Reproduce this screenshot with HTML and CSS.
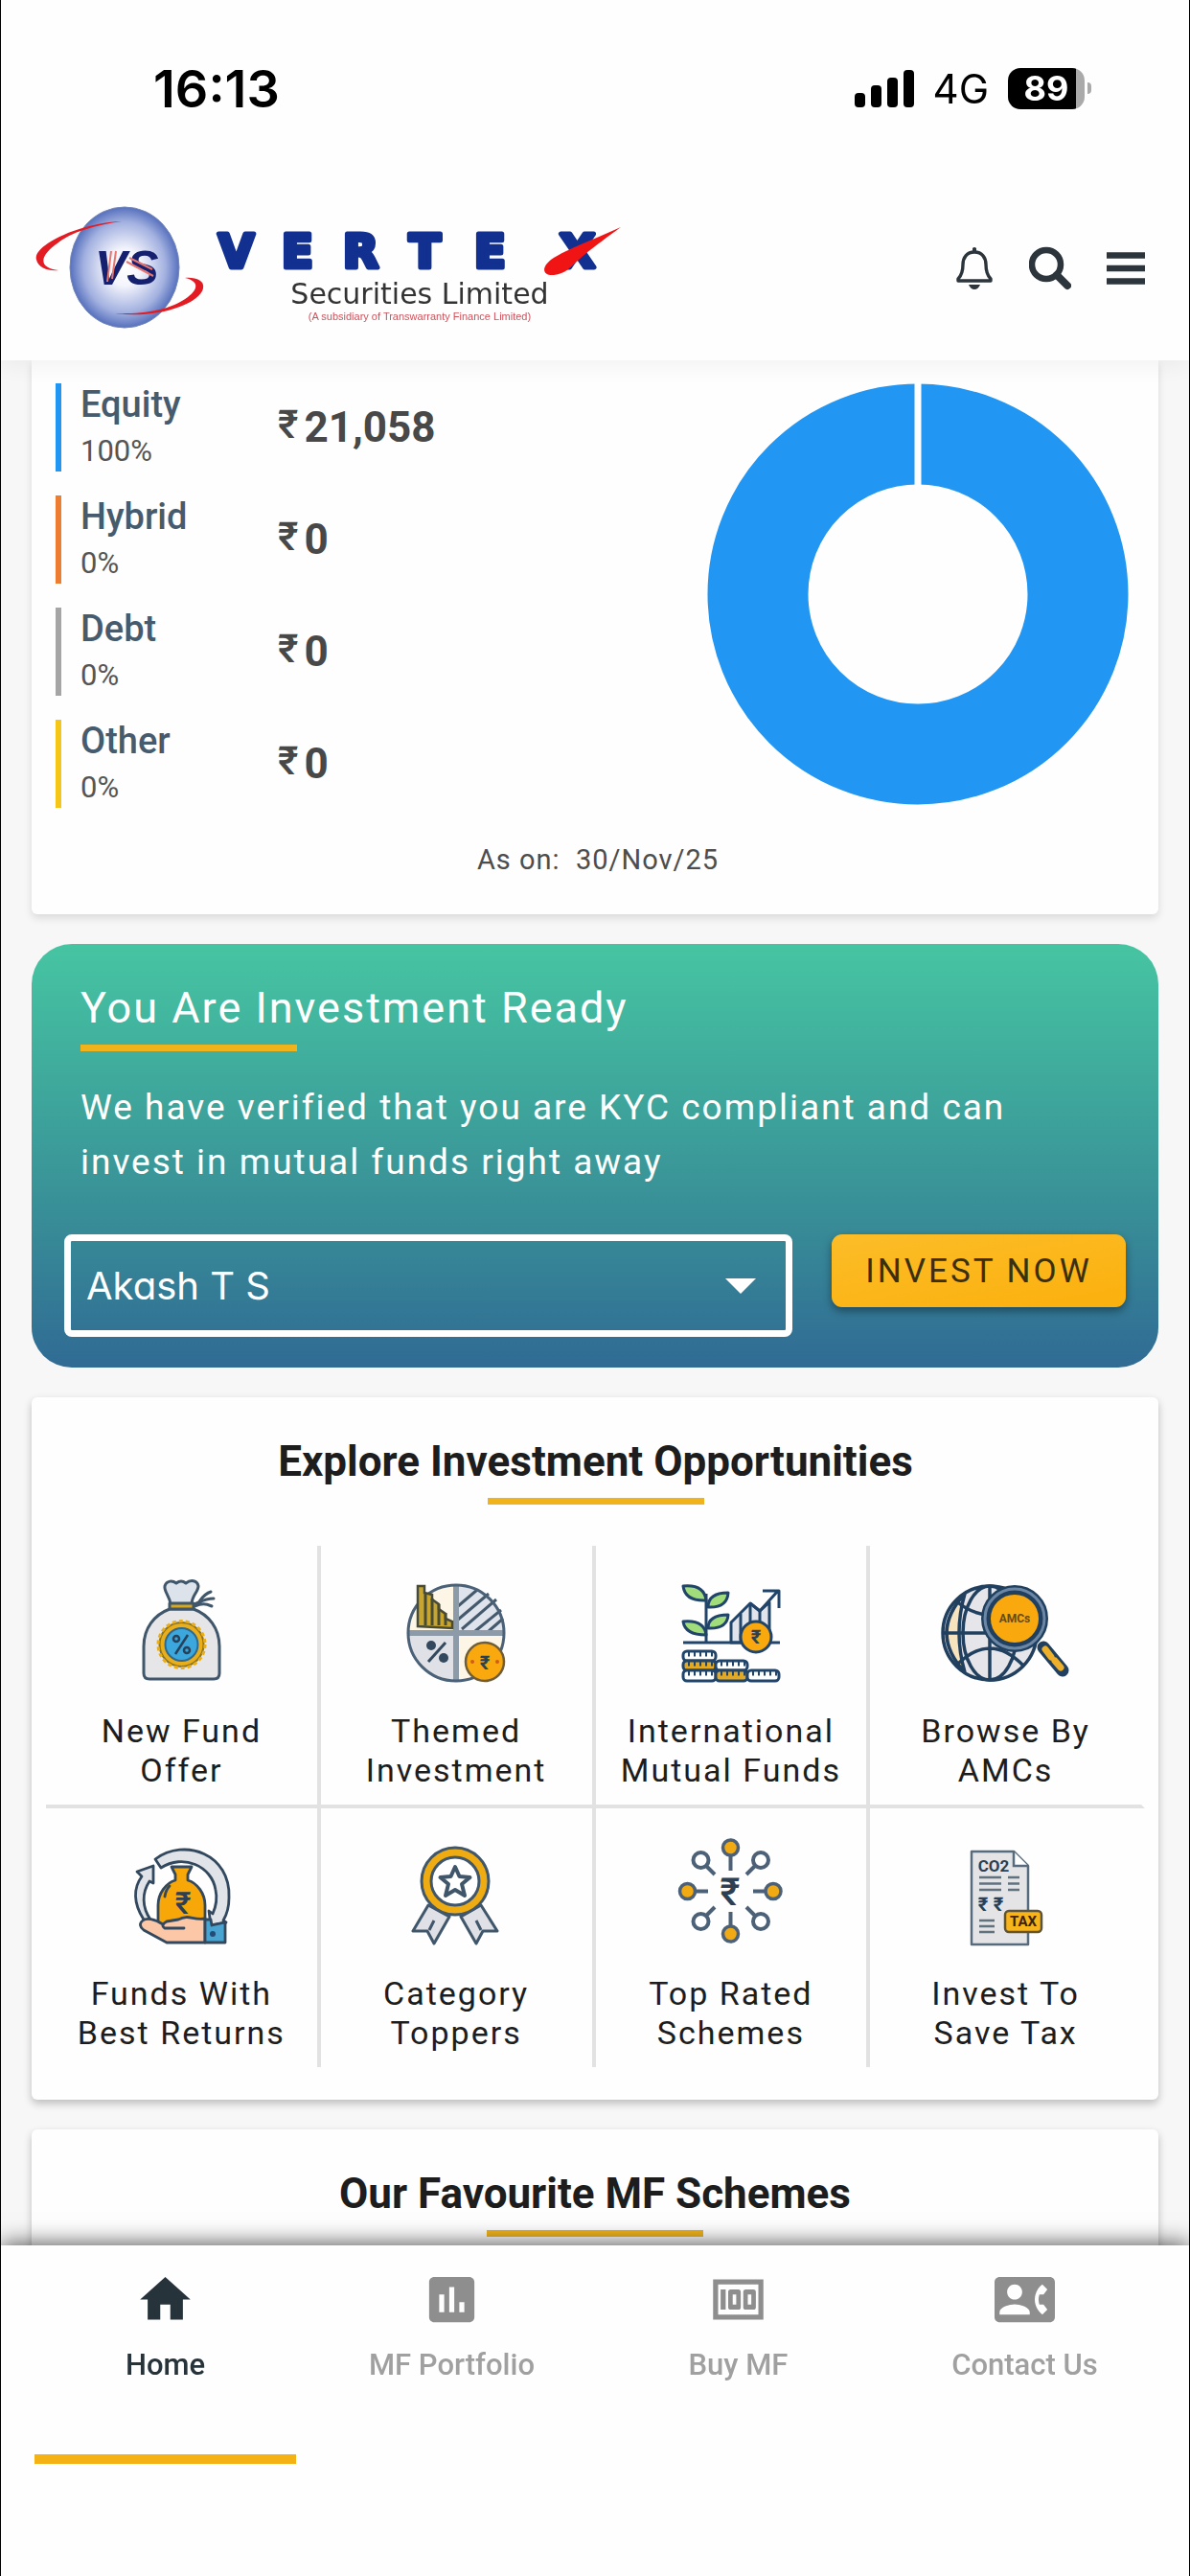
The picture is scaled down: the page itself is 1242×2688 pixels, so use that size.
FILE: index.html
```html
<!DOCTYPE html>
<html lang="en">
<head>
<meta charset="utf-8">
<meta name="viewport" content="width=device-width, initial-scale=1">
<title>Vertex Securities Limited</title>
<link rel="stylesheet" href="styles.css">
</head>
<body>
<div class="app">
  <header class="top">
    <div class="status">
      <span class="clock">16:13</span>
      <div class="status-icons">
        <svg class="signal" viewBox="0 0 62 40" aria-hidden="true"><rect x="0" y="25" width="11" height="15" rx="4"/><rect x="17" y="17" width="11" height="23" rx="4"/><rect x="34" y="9" width="11" height="31" rx="4"/><rect x="51" y="1" width="11" height="39" rx="4"/></svg>
        <span class="network">4G</span>
        <span class="battery"><span class="battery-level">89</span></span>
      </div>
    </div>
    <div class="bar">
      <a class="brand" href="#" aria-label="Vertex Securities Limited">
        <svg viewBox="0 0 620 140" class="logo">
          <defs>
            <radialGradient id="orb"><stop offset="0" stop-color="#fff"/><stop offset=".3" stop-color="#f4f5fc"/><stop offset=".75" stop-color="#a3b1e0"/><stop offset="1" stop-color="#5670bd"/></radialGradient>
          </defs>
          <ellipse cx="95" cy="69" rx="57" ry="63" fill="url(#orb)" stroke="#7586b8" stroke-width="1"/>
          <path d="M92 21C50 22-2 46 3 61c2 9 13 12 23 11C8 70 4 60 22 46 40 31 65 25 92 21z" fill="#e31b23"/>
          <path d="M85 117c42 6 88-9 92-26 2-9-9-12-19-11 14 3 15 11 3 20-18 14-48 18-76 17z" fill="#e31b23"/>
          <text x="64" y="87" class="logo-vs">VS</text>
          <path d="M81 52 77 84M86 52 82 81M97 63l28 15M100 59l24 12" stroke="#e8766f" stroke-width="2" fill="none"/>
          <text x="193 259 323 392 460 549" y="69" class="logo-name">VERTEX</text>
          <path d="M613 27C582 41 556 50 540 61c-11 9-8 17 3 16 12-1 18-9 25-15 13-12 26-21 45-35z" fill="#f11414"/>
          <text x="403" y="107" class="logo-sub">Securities Limited</text>
          <text x="403" y="124" class="logo-note">(A subsidiary of Transwarranty Finance Limited)</text>
        </svg>
      </a>
      <div class="actions">
        <button class="icon-btn" type="button" aria-label="Notifications">
          <svg viewBox="0 0 44 46"><path d="M22 6c-8 0-12 6-12 13 0 8-2 12-5 15v2h34v-2c-3-3-5-7-5-15 0-7-4-13-12-13z" fill="none" stroke="#2b353b" stroke-width="3.4" stroke-linejoin="round"/><path d="M20 6V2q2-2 4 0v4zM16 40h12q-2 5-6 5t-6-5z" fill="#2b353b"/></svg>
        </button>
        <button class="icon-btn" type="button" aria-label="Search">
          <svg viewBox="0 0 44 46"><circle cx="18" cy="19" r="15" fill="none" stroke="#2b353b" stroke-width="6.5"/><path d="M29 30 40 41" stroke="#2b353b" stroke-width="8" stroke-linecap="round"/></svg>
        </button>
        <button class="icon-btn" type="button" aria-label="Menu">
          <svg viewBox="0 0 44 46"><path d="M2 9.500h40M2 23h40M2 36.500h40" stroke="#2b353b" stroke-width="6.500"/></svg>
        </button>
      </div>
    </div>
  </header>

  <main class="content">
    <section class="card holdings">
      <div class="holdings-body">
        <ul class="assets">
          <li class="asset asset-equity"><div class="asset-label"><span class="asset-name">Equity</span><span class="asset-share">100%</span></div><div class="asset-value"><span class="rupee">₹</span>21,058</div></li>
          <li class="asset asset-hybrid"><div class="asset-label"><span class="asset-name">Hybrid</span><span class="asset-share">0%</span></div><div class="asset-value"><span class="rupee">₹</span>0</div></li>
          <li class="asset asset-debt"><div class="asset-label"><span class="asset-name">Debt</span><span class="asset-share">0%</span></div><div class="asset-value"><span class="rupee">₹</span>0</div></li>
          <li class="asset asset-other"><div class="asset-label"><span class="asset-name">Other</span><span class="asset-share">0%</span></div><div class="asset-value"><span class="rupee">₹</span>0</div></li>
        </ul>
        <svg class="donut" viewBox="0 0 440 440" role="img" aria-label="Equity 100%"><circle cx="220" cy="220" r="167" fill="none" stroke="#2196f3" stroke-width="105"/><path d="M220 0v110" stroke="#fff" stroke-width="7"/></svg>
      </div>
      <p class="as-on">As on:&nbsp; 30/Nov/25</p>
    </section>

    <section class="ready">
      <h2 class="ready-title">You Are Investment Ready</h2>
      <p class="ready-text">We have verified that you are KYC compliant and can invest in mutual funds right away</p>
      <div class="ready-form">
        <div class="select-wrap">
          <select class="investor" aria-label="Investor"><option>Akash T S</option></select>
          <svg class="caret" viewBox="0 0 32 16" aria-hidden="true"><path d="M0 0h32L16 16z" fill="#fff"/></svg>
        </div>
        <button class="invest" type="button">INVEST NOW</button>
      </div>
    </section>

    <section class="card explore">
      <h2 class="card-title">Explore Investment Opportunities</h2>
      <div class="tiles">
        <a class="tile" href="#">
          <svg viewBox="0 0 140 116" aria-hidden="true">
            <g stroke="#3f566b" stroke-width="3" stroke-linejoin="round" stroke-linecap="round">
              <path d="M59 31C58 22 52 18 53 12c2-6 8-6 12-3q5-4 10 0c5-4 12-3 13 3 0 6-7 10-7 19z" fill="#dde3ea"/>
              <path d="M58 36C42 42 31 56 31 75v28q0 6 6 6h67q6 0 6-6V75c0-19-11-33-27-39z" fill="#e6e5e7"/>
              <path d="M58 30h25v6H58z" fill="#d9a71c"/>
              <path d="M84 33c6-3 7-12 17-15M84 33c8-3 11-3 18 0M84 31c7-3 11-6 20-6" fill="none"/>
            </g>
            <circle cx="70.500" cy="73" r="23" fill="#e9ae19" stroke="#8a7322" stroke-width="2"/>
            <circle cx="70.500" cy="73" r="24.500" fill="none" stroke="#e9ae19" stroke-width="3" stroke-dasharray="4 3"/>
            <circle cx="70.500" cy="73" r="17" fill="#3ba7dc" stroke="#31688c" stroke-width="2"/>
            <g stroke="#27415a" stroke-width="2.500" fill="none"><path d="M77 63 64 83"/><circle cx="65" cy="67" r="3"/><circle cx="76" cy="79" r="3"/></g>
          </svg>
          <span>New Fund<br>Offer</span>
        </a>
        <a class="tile" href="#">
          <svg viewBox="0 0 140 116" aria-hidden="true">
            <path d="M70 61V11a50 50 0 0 0-50 50z" fill="#fdf6e6"/>
            <path d="M70 61h50a50 50 0 0 0-50-50z" fill="#dfe4ec"/>
            <path d="M70 61H20a50 50 0 0 0 50 50z" fill="#dfe1e6"/>
            <path d="M70 61v50a50 50 0 0 0 50-50z" fill="#fdf6e6"/>
            <path d="M72 33 92 16M72 47 104 20M76 57l36-31M90 59l27-22M104 59l15-13" stroke="#45596d" stroke-width="3"/>
            <path d="M70 11v100M20 61h100" stroke="#8d9aa7" stroke-width="6"/>
            <circle cx="70" cy="61" r="50" fill="none" stroke="#4a6178" stroke-width="3"/>
            <path d="M30 54V12h7v7l8 2v5l7 5v5l7 5v5l7 3v7z" fill="#c7a52f" stroke="#474b35" stroke-width="2.500"/>
            <path d="M38 19v34M45 25v28M52 31v22M59 40v13" stroke="#474b35" stroke-width="3"/>
            <path d="M59 71 41 91" stroke="#34495e" stroke-width="3"/><circle cx="44" cy="74" r="5" fill="#34495e"/><circle cx="57" cy="87" r="5" fill="#34495e"/>
            <circle cx="100" cy="91" r="20" fill="#f9a90d" stroke="#705d38" stroke-width="2.500"/>
            <text x="100" y="99" class="ico-text ico-rupee">₹</text><circle cx="87" cy="91" r="2" fill="#cf5c19"/><circle cx="113" cy="91" r="2" fill="#cf5c19"/>
          </svg>
          <span>Themed<br>Investment</span>
        </a>
        <a class="tile" href="#">
          <svg viewBox="0 0 140 116" aria-hidden="true">
            <g stroke="#21446b" stroke-width="3" stroke-linejoin="round">
              <path d="M70 71V50L90 30l10 8 10-9v42z" fill="#e1e4ea"/>
              <path d="M80 41v30M90 30v41M100 38v33" fill="none"/>
              <path d="M90 30l10 8 19-21M103 17h17v18" fill="none"/>
              <path d="M20 71h101M44 20v51" fill="none"/>
              <path d="M20 12q22-2 24 15-22 1-24-15zM46 34q0-15 21-15-1 16-21 15zM20 49q22-2 24 14-22 0-24-14zM46 56q0-14 21-14-1 15-21 14z" fill="#a1de7b"/>
              <circle cx="96" cy="65" r="16" fill="#f9a90d"/>
            </g>
            <text x="96" y="72" class="ico-text ico-rupee">₹</text>
            <g stroke="#21446b" stroke-width="3"><rect x="20" y="80" width="34" height="10" rx="4" fill="#fff"/><rect x="20" y="90" width="34" height="10" rx="4" fill="#e5a91f"/><rect x="20" y="100" width="34" height="11" rx="4" fill="#fff"/><rect x="54" y="90" width="33" height="10" rx="4" fill="#fff"/><rect x="54" y="100" width="33" height="11" rx="4" fill="#e5a91f"/><rect x="87" y="100" width="33" height="11" rx="4" fill="#fff"/></g>
            <path d="M25 83h26M25 93h26M59 93h26M25 103h26M59 103h26M92 103h26" stroke="#21446b" stroke-width="5" stroke-dasharray="2 4"/>
          </svg>
          <span>International<br>Mutual Funds</span>
        </a>
        <a class="tile" href="#">
          <svg viewBox="0 0 140 116" aria-hidden="true">
            <g stroke="#21405f" stroke-width="3.500" fill="none">
              <ellipse cx="53" cy="61" rx="49" ry="49" fill="#e6e5ea"/>
              <path d="M27 20Q-11 61 27 102q-12-41 0-82z" fill="#f8e3bf"/>
              <ellipse cx="53" cy="61" rx="28" ry="49"/><path d="M53 12v98M4 61h98M17 27q36 30 72 0M17 96q36-38 72 0"/>
            </g>
            <circle cx="79" cy="46" r="30" fill="#f9a90d" stroke="#21405f" stroke-width="10"/>
            <circle cx="79" cy="46" r="31" fill="none" stroke="#6c87a6" stroke-width="3"/>
            <path d="M109 76l20 24" stroke="#21405f" stroke-width="13" stroke-linecap="round"/><path d="M111 78l6 8M121 90l6 7" stroke="#eeb02a" stroke-width="7" stroke-linecap="round"/>
            <text x="79" y="50" class="ico-text ico-amc">AMCs</text>
          </svg>
          <span>Browse By<br>AMCs</span>
        </a>
        <a class="tile" href="#">
          <svg viewBox="0 0 140 116" aria-hidden="true">
            <g stroke="#32485f" stroke-width="2.800" stroke-linejoin="round" stroke-linecap="round">
              <path d="M43 23C74 0 122 18 120 63q0 14-6 24l3 2-16 3-2-15 4 3c4-9 5-16 3-25C102 30 72 17 49 32z" fill="#e0e4e9"/>
              <path d="M31 86C20 69 20 53 29 41l-5-5 17-6v18l-4-2c-8 12-8 27 1 40" fill="#e0e4e9"/>
              <path d="M60 31h21l-4 8v6c10 3 18 14 18 26v21H46V71c0-12 8-23 18-26v-6z" fill="#f7a707"/>
              <path d="M53 62q1-7 5-11" fill="none"/>
              <path d="M51 91c-9-6-17-7-21-4s-3 7 1 10l24 13h40V85c-14 2-16-5-28 1l-12 2q-7 4-2 7h20" fill="#fbc7a7"/>
              <path d="M95 86h6l1 6 14-3v21H95z" fill="#4aa4d2"/>
            </g>
            <circle cx="103" cy="101" r="3" fill="#244a76"/>
            <text x="72" y="80" class="ico-text ico-rupee-lg">₹</text>
          </svg>
          <span>Funds With<br>Best Returns</span>
        </a>
        <a class="tile" href="#">
          <svg viewBox="0 0 140 116" aria-hidden="true">
            <g stroke="#3f566b" stroke-width="3" stroke-linejoin="round">
              <path d="M41 71 25 98h15l7 13 16-28zM96 71l17 27H98l-7 13-16-28z" fill="#dfe1e6"/>
              <path d="M42 97l5-10M96 97l-5-10" fill="none"/>
              <circle cx="69" cy="46" r="35" fill="#efac12"/><circle cx="69" cy="46" r="25" fill="#fff"/>
              <path d="M69 31l4.500 10 11 1-8.500 7 3 12-10-6-10 6 3-12-8.500-7 11-1z" fill="#fff" stroke-width="4"/>
            </g>
          </svg>
          <span>Category<br>Toppers</span>
        </a>
        <a class="tile" href="#">
          <svg viewBox="0 0 140 116" aria-hidden="true">
            <g stroke="#4c6177" stroke-width="4">
              <path d="M69.500 19v16M69.500 78v16M33 56.500h13M93 56.500h13M44 30l9 9M95 30l-9 9M44 82l9-9M95 82l-9-9"/>
              <g fill="#f2aa14" stroke-width="3.500"><circle cx="69.500" cy="11" r="8"/><circle cx="69.500" cy="101" r="8"/><circle cx="24.500" cy="56.500" r="8"/><circle cx="114" cy="56.500" r="8"/></g>
              <g fill="#fff"><circle cx="38.500" cy="24" r="8"/><circle cx="101" cy="24" r="8"/><circle cx="38.500" cy="88" r="8"/><circle cx="101" cy="88" r="8"/></g>
            </g>
            <text x="69" y="71" class="ico-text ico-rupee-xl">₹</text>
          </svg>
          <span>Top Rated<br>Schemes</span>
        </a>
        <a class="tile" href="#">
          <svg viewBox="0 0 140 116" aria-hidden="true">
            <path d="M34 15h44l15 15v82H34z" fill="#e4e4e6" stroke="#566b7e" stroke-width="2.500" stroke-linejoin="round"/>
            <path d="M78 15v15h15" fill="#fff" stroke="#566b7e" stroke-width="2.500"/>
            <path d="M42 42h23M42 48.500h23M42 55h23M72 42h12M72 48.500h12M72 55h12M42 87h16M42 93h16M42 99h16" stroke="#61727f" stroke-width="2.500"/>
            <text x="57" y="36" class="ico-text ico-co">CO2</text>
            <text x="46" y="77" class="ico-text ico-rupee">₹</text><text x="62" y="77" class="ico-text ico-rupee">₹</text>
            <rect x="69" y="77" width="38" height="22" rx="4" fill="#f7b51b" stroke="#5f5334" stroke-width="2.500"/>
            <text x="88" y="93" class="ico-text ico-tax">TAX</text>
          </svg>
          <span>Invest To<br>Save Tax</span>
        </a>
      </div>
    </section>

    <section class="card favourites">
      <h2 class="card-title">Our Favourite MF Schemes</h2>
    </section>
  </main>

  <nav class="tabs" aria-label="Main">
    <a class="tab tab-active" href="#" aria-current="page">
      <svg viewBox="0 0 24 24"><path d="M10 20v-6h4v6h5v-8h3L12 3 2 12h3v8z"/></svg>
      <span>Home</span>
    </a>
    <a class="tab" href="#">
      <svg viewBox="0 0 24 24"><path d="M19 3H5c-1.100 0-2 .9-2 2v14c0 1.100.9 2 2 2h14c1.100 0 2-.9 2-2V5c0-1.100-.9-2-2-2zM9 17H7v-7h2v7zm4 0h-2V7h2v10zm4 0h-2v-4h2v4z"/></svg>
      <span>MF Portfolio</span>
    </a>
    <a class="tab" href="#">
      <svg viewBox="0 0 24 24"><path fill-rule="evenodd" d="M2 4h20v16H2zM4 6v12h16V6zM5 8h2v8H5zM9 8h3a1 1 0 0 1 1 1v6a1 1 0 0 1-1 1H9a1 1 0 0 1-1-1V9a1 1 0 0 1 1-1zm.8 2v4h1.400v-4zM15 8h3a1 1 0 0 1 1 1v6a1 1 0 0 1-1 1h-3a1 1 0 0 1-1-1V9a1 1 0 0 1 1-1zm.8 2v4h1.400v-4z"/></svg>
      <span>Buy MF</span>
    </a>
    <a class="tab" href="#">
      <svg viewBox="0 0 24 24"><path d="M22 3H2C.9 3 0 3.900 0 5v14c0 1.100.9 2 2 2h20c1.100 0 1.990-.9 1.990-2L24 5c0-1.100-.9-2-2-2zM8 6c1.660 0 3 1.340 3 3s-1.340 3-3 3-3-1.340-3-3 1.340-3 3-3zm6 12H2v-1c0-2 4-3.100 6-3.100s6 1.100 6 3.100v1zm3.850-4h1.640L21 16l-1.990 1.990c-1.310-.98-2.280-2.380-2.730-3.990-.18-.64-.28-1.310-.28-2s.1-1.360.28-2c.45-1.620 1.420-3.010 2.730-3.990L21 8l-1.510 2h-1.640c-.22.63-.35 1.300-.35 2s.13 1.370.35 2z"/></svg>
      <span>Contact Us</span>
    </a>
  </nav>
</div>
</body>
</html>
```
FILE: styles.css
```css
* { box-sizing: border-box; }

body {
  margin: 0;
  background: #fff;
  color: #1d1d1d;
  font-family: Roboto, "Noto Sans", sans-serif;
}

h2, p, ul { margin: 0; padding: 0; font-weight: 400; }
ul { list-style: none; }
a { color: inherit; text-decoration: none; }
button { border: 0; background: none; padding: 0; font: inherit; cursor: pointer; }
svg { display: block; }

.app {
  display: flex;
  flex-direction: column;
  height: 100vh;
  border: solid #000;
  border-width: 0 1px;
}

/* Header */
.top {
  flex: none;
  position: relative;
  z-index: 1;
  background: #fefefe;
  box-shadow: 0 4px 24px rgba(0, 0, 0, .06);
}
.status {
  display: flex;
  align-items: center;
  justify-content: space-between;
  height: 184px;
  padding: 0 102px 0 159px;
  font-family: Inter, "Liberation Sans", sans-serif;
  color: #000;
}
.clock { font-size: 54px; font-weight: 600; }
.status-icons { display: flex; align-items: center; gap: 20px; }
.signal { width: 62px; height: 40px; }
.network { font-size: 42px; font-weight: 400; }
.battery { display: flex; align-items: center; gap: 3px; }
.battery::after { content: ""; width: 4px; height: 12px; border-radius: 0 4px 4px 0; background: #aaa; }
.battery-level {
  width: 80px;
  height: 43px;
  border-radius: 13px;
  background: linear-gradient(90deg, #000 71px, #aaa 71px);
  color: #fff;
  font-size: 36px;
  font-weight: 700;
  line-height: 43px;
  text-align: center;
}
.bar {
  display: flex;
  align-items: center;
  justify-content: space-between;
  height: 192px;
  padding: 0 44px 0 34px;
}
.brand { flex: none; }
.logo { width: 620px; height: 140px; }
.logo-vs { font: italic 700 50px "Liberation Sans", sans-serif; fill: #15206e; }
.logo-name {
  font: 700 48px "DejaVu Sans", sans-serif;
  fill: #12308f;
  stroke: #12308f;
  stroke-width: 5px;
  stroke-linejoin: round;
}
.logo-sub { font: 30px "DejaVu Sans", sans-serif; fill: #333; text-anchor: middle; }
.logo-note { font: 11px "Liberation Sans", sans-serif; fill: #d0525c; text-anchor: middle; }
.actions { display: flex; gap: 35px; }
.icon-btn svg { width: 44px; height: 46px; }

/* Scrolling content */
.content {
  flex: 1;
  min-height: 0;
  display: flex;
  flex-direction: column;
  gap: 31px;
  padding: 0 32px;
  overflow-y: auto;
  scrollbar-width: none;
  background: #f7f7f7;
}
.content > * { flex: none; }
.card {
  background: #fefefe;
  border-radius: 6px;
  box-shadow: 0 4px 8px rgba(0, 0, 0, .24);
}

.holdings { border-radius: 0 0 6px 6px; padding: 24px 31px 39px 25px; box-shadow: 0 4px 8px rgba(0, 0, 0, .12); }
.holdings-body { display: flex; justify-content: space-between; }
.assets { display: grid; gap: 25px; align-content: start; }
.asset {
  display: grid;
  grid-template-columns: 206px auto;
  height: 92px;
  padding-left: 20px;
  border-left: 6px solid;
}
.asset-equity { border-color: #2196f3; }
.asset-hybrid { border-color: #ed7d31; }
.asset-debt { border-color: #a5a5a5; }
.asset-other { border-color: #f5c518; }
.asset-label { display: grid; gap: 9px; align-content: start; }
.asset-name { font-size: 38px; font-weight: 500; line-height: 44px; color: #465b6e; }
.asset-share { font-size: 31px; line-height: 36px; color: #555; }
.asset-value { display: flex; align-items: center; gap: 6px; font-size: 44px; font-weight: 700; color: #484848; }
.rupee { font-size: 41px; font-weight: 500; line-height: 50px; padding-bottom: 6px; }
.donut { width: 440px; height: 440px; }
.as-on { margin-top: 36px; padding-left: 12px; font-size: 29px; line-height: 36px; letter-spacing: 1px; text-align: center; color: #4d4d4d; }

/* KYC banner */
.ready {
  padding: 41px 34px 32px;
  border-radius: 42px;
  background: linear-gradient(#46c5a2, #3a9698 55%, #306b94);
  color: #fff;
}
.ready-title { padding-left: 17px; font-size: 45px; line-height: 52px; letter-spacing: 2px; }
.ready-title::after, .card-title::after {
  content: "";
  display: block;
  width: 226px;
  height: 7px;
  margin-top: 12px;
  background: #f0b31c;
}
.ready-text { margin: 30px 17px 0; max-width: 1000px; font-size: 37px; line-height: 57px; letter-spacing: 2px; }
.ready-form { display: flex; align-items: flex-start; gap: 41px; margin-top: 47px; }
.select-wrap { flex: 1; display: grid; align-items: center; }
.select-wrap > * { grid-area: 1 / 1; }
.investor {
  appearance: none;
  width: 100%;
  height: 107px;
  padding: 0 80px 0 16px;
  border: 7px solid #fff;
  border-radius: 8px;
  background: none;
  color: #fff;
  font: 40px Inter, "Liberation Sans", sans-serif;
  font-feature-settings: "cv11";
}
.investor option { color: #1d1d1d; }
.caret { width: 32px; height: 16px; margin-right: 38px; justify-self: end; pointer-events: none; }
.invest {
  width: 307px;
  height: 76px;
  border-radius: 11px;
  background: linear-gradient(170deg, #fcbd28, #fbb00d);
  box-shadow: 0 4px 8px rgba(0, 0, 0, .4);
  color: #3b2f12;
  font-size: 35px;
  letter-spacing: 3px;
}

/* Opportunity tiles */
.card-title {
  display: flex;
  flex-direction: column;
  align-items: center;
  font-size: 44px;
  font-weight: 700;
  line-height: 52px;
}
.explore { padding: 41px 14px 34px 15px; }
.tiles { display: grid; grid-template-columns: repeat(4, 1fr); margin-top: 43px; }
.tile {
  display: flex;
  flex-direction: column;
  align-items: center;
  gap: 27px;
  padding: 30px 0 15px;
  border-right: 4px solid #e2e2e2;
  border-bottom: 4px solid #e2e2e2;
  font-size: 34px;
  line-height: 41px;
  letter-spacing: 2px;
  text-align: center;
}
.tile:nth-child(4n) { border-right-color: transparent; }
.tile:nth-child(n+5) { border-bottom: 0; }
.tile svg { width: 140px; height: 116px; }
.ico-text { font-family: Roboto, "Noto Sans", sans-serif; text-anchor: middle; letter-spacing: 0; fill: #2d4053; }
.ico-rupee { font-size: 20px; font-weight: 700; }
.ico-rupee-lg { font-size: 32px; font-weight: 500; }
.ico-rupee-xl { font-size: 40px; font-weight: 500; }
.ico-amc { font-size: 12px; font-weight: 700; fill: #6b4a12; }
.ico-co { font-size: 17px; font-weight: 700; }
.ico-tax { font-size: 15px; font-weight: 700; fill: #3b2408; }
.favourites { padding: 41px 16px 32px; }

/* Bottom tabs */
.tabs {
  flex: none;
  position: relative;
  z-index: 1;
  display: grid;
  grid-template-columns: repeat(4, 1fr);
  padding: 25px 22px 117px;
  background: #fefefe;
  box-shadow: 0 -2px 22px rgba(0, 0, 0, .65);
}
.tab {
  display: flex;
  flex-direction: column;
  align-items: center;
  gap: 19px;
  margin: 0 13px;
  padding-bottom: 75px;
  border-bottom: 10px solid transparent;
  color: #a0a0a0;
  fill: #8e8e8e;
  font-size: 31px;
  font-weight: 500;
  line-height: 36px;
}
.tab svg { width: 63px; height: 63px; }
.tab-active { color: #27333b; fill: #27333b; border-bottom-color: #f4b214; }
```
